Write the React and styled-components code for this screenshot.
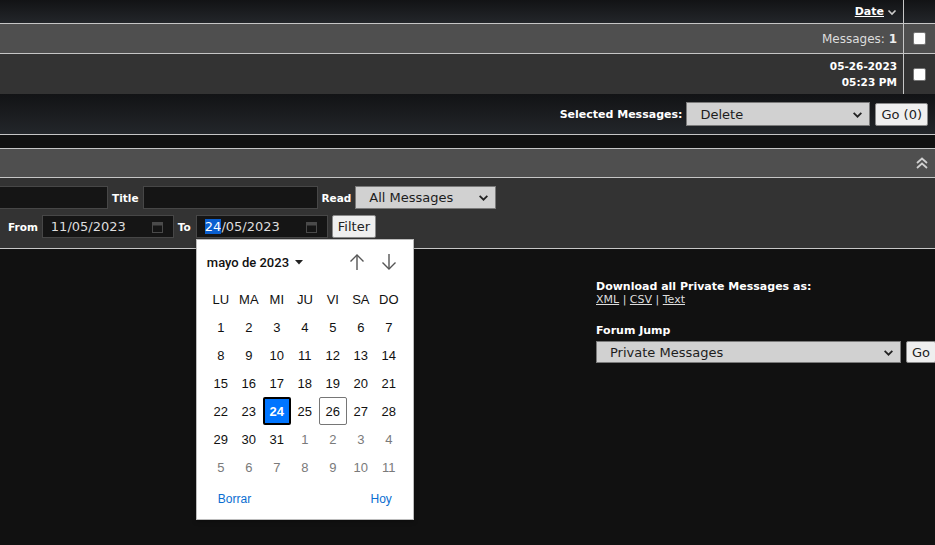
import React from 'react';
import styled, { createGlobalStyle } from 'styled-components';

const GlobalStyle = createGlobalStyle`
  html, body {
    margin: 0;
    padding: 0;
    background: #111;
  }
  body {
    font-family: "DejaVu Sans", Verdana, sans-serif;
    font-size: 11px;
    color: #fff;
    overflow: hidden;
  }
`;

const Page = styled.div`
  width: 935px;
  height: 545px;
  overflow: hidden;
  background: #111;
`;

const LINE = '#c6c6c6';
const GRADIENT = 'linear-gradient(to bottom, #121315 0%, #23262a 100%)';

const Row = styled.div`
  display: grid;
  grid-template-columns: 1fr 32px;
  height: ${p => p.h}px;
  background: ${p => p.bg};
  border-bottom: ${p => (p.line ? `1px solid ${LINE}` : 'none')};
`;

const MainCell = styled.div`
  display: flex;
  flex-direction: column;
  align-items: flex-end;
  justify-content: center;
  padding-right: 6px;
  line-height: 16px;
`;

const CheckCell = styled.div`
  border-left: 1px solid ${LINE};
  display: flex;
  align-items: center;
  justify-content: center;
`;

const Checkbox = styled.div`
  width: 11px;
  height: 11px;
  background: #fff;
  border: 1px solid #767676;
  border-radius: 2px;
`;

const SortLink = styled.span`
  display: flex;
  align-items: center;
  gap: 3px;
  font-weight: bold;
  font-size: 11px;
  a {
    color: #fff;
    text-decoration: underline;
  }
`;

const Count = styled.span`
  color: #ddd;
  font-size: 12px;
  b {
    color: #eee;
  }
`;

const Stamp = styled.span`
  font-weight: bold;
  font-size: 10.5px;
  color: #fff;
`;

const ActionBar = styled.div`
  height: 40px;
  background: ${GRADIENT};
  border-bottom: 1px solid ${LINE};
  display: flex;
  align-items: center;
  justify-content: flex-end;
  padding-right: 7px;
  gap: 4px;
`;

const Label = styled.span`
  font-weight: bold;
  font-size: ${p => p.fs || 11}px;
  color: #fff;
`;

const Select = styled.div`
  box-sizing: border-box;
  width: ${p => p.w}px;
  height: ${p => p.h || 24}px;
  background: #d1d1d1;
  border: 1px solid #7a7a7a;
  color: #1d1d1d;
  font-size: 13px;
  display: flex;
  align-items: center;
  justify-content: space-between;
  padding: 0 6px 0 13px;
`;

const Button = styled.div`
  box-sizing: border-box;
  height: ${p => p.h || 23}px;
  padding: 0 5px;
  margin-left: ${p => p.ml || 0}px;
  background: #efefef;
  border: 1px solid #8a8a8a;
  border-radius: 2px;
  color: #222;
  font-size: 13px;
  display: flex;
  align-items: center;
`;

const Spacer = styled.div`
  height: 13px;
  background: #111;
  border-bottom: 1px solid ${LINE};
`;

const SectionBar = styled.div`
  height: 28px;
  background: #4f4f4f;
  border-bottom: 1px solid ${LINE};
  display: flex;
  align-items: center;
  justify-content: flex-end;
  padding-right: 6px;
`;

const FilterArea = styled.div`
  height: 62px;
  padding-top: 8px;
  background: #333;
  border-bottom: 1px solid ${LINE};
  display: flex;
  flex-direction: column;
  gap: 6px;
`;

const FilterRow = styled.div`
  display: flex;
  align-items: center;
  gap: 4px;
  padding-left: ${p => p.pl || 0}px;
  margin-left: ${p => p.ml || 0}px;
`;

const TextInput = styled.div`
  box-sizing: border-box;
  width: ${p => p.w}px;
  height: 23px;
  background: #151515;
  border: 1px solid #474747;
`;

const DateWrap = styled.div`
  position: relative;
  margin-left: ${p => p.ml || 0}px;
`;

const DateInput = styled.div`
  box-sizing: border-box;
  width: 132px;
  height: 23px;
  background: #151515;
  border: 1px solid #474747;
  color: #ddd;
  font-size: 13px;
  display: flex;
  align-items: center;
  justify-content: space-between;
  padding: 0 10px 0 8px;
`;

const Highlight = styled.span`
  background: #0a5fd0;
  color: #fff;
`;

const Lower = styled.div`
  display: flex;
  padding-top: 31px;
`;

const LowerLeft = styled.div`
  width: 596px;
  flex-shrink: 0;
`;

const SideBox = styled.div`
  display: flex;
  flex-direction: column;
  line-height: 13px;
`;

const Links = styled.div`
  color: #ddd;
  font-size: 11px;
  margin-bottom: 18px;
  a {
    color: #ddd;
    text-decoration: underline;
  }
`;

const JumpRow = styled.div`
  display: flex;
  align-items: center;
  gap: 5px;
  margin-top: 4px;
`;

/* calendar popup */

const Popup = styled.div`
  position: absolute;
  top: 24px;
  left: 0;
  width: 216px;
  height: 279px;
  background: #fff;
  border: 1px solid #bcbcbc;
  box-shadow: 0 2px 4px rgba(0, 0, 0, 0.25);
  font-family: "Liberation Sans", Arial, sans-serif;
  color: #111;
  z-index: 5;
`;

const CalHeader = styled.div`
  display: flex;
  align-items: center;
  height: 24px;
  margin: 10px 0 11px;
  padding: 0 16px 0 10px;
`;

const MonthLabel = styled.div`
  font-family: Roboto, "Liberation Sans", sans-serif;
  font-weight: 500;
  font-size: 13px;
  display: flex;
  align-items: center;
  gap: 6px;
  flex: 1;
`;

const Arrows = styled.div`
  display: flex;
  gap: 16px;
`;

const Grid = styled.div`
  display: grid;
  grid-template-columns: repeat(7, 28px);
  grid-auto-rows: 28px;
  padding-left: 10px;
`;

const Cell = styled.div`
  box-sizing: border-box;
  display: flex;
  align-items: center;
  justify-content: center;
  font-size: 13px;
  color: ${p => (p.muted ? '#7a7a7a' : '#111')};
  ${p => p.today && 'border: 1px solid #767676; border-radius: 2px;'}
  ${p => p.selected && 'background: #0075ff; color: #fff; font-weight: bold; border: 2px solid #000; border-radius: 2px;'}
`;

const CalFooter = styled.div`
  display: flex;
  justify-content: space-between;
  align-items: center;
  height: 24px;
  margin-top: 6px;
  padding: 0 21px 0 21px;
  font-size: 12px;
  color: #0a6ed1;
`;

const Chevron = ({ size = 10, color = '#ccc' }) => (
  <svg width={size} height={size} viewBox="0 0 10 10">
    <polyline points="1.5,3.5 5,7 8.5,3.5" fill="none" stroke={color} strokeWidth="1.6" />
  </svg>
);

const DoubleUp = () => (
  <svg width="14" height="12" viewBox="0 0 14 12">
    <polyline points="2,6 7,1.5 12,6" fill="none" stroke="#d0d0d0" strokeWidth="1.8" />
    <polyline points="2,11 7,6.5 12,11" fill="none" stroke="#d0d0d0" strokeWidth="1.8" />
  </svg>
);

const CalIcon = () => (
  <svg width="11" height="12" viewBox="0 0 11 12">
    <rect x="0.5" y="1.5" width="10" height="10" fill="none" stroke="#4a4a4a" />
    <rect x="0.5" y="1.5" width="10" height="3" fill="#4a4a4a" />
  </svg>
);

const Arrow = ({ down }) => (
  <svg width="16" height="18" viewBox="0 0 16 18" style={down ? { transform: 'rotate(180deg)' } : undefined}>
    <line x1="8" y1="2" x2="8" y2="17" stroke="#555" strokeWidth="1.4" />
    <polyline points="1.5,8.5 8,2 14.5,8.5" fill="none" stroke="#555" strokeWidth="1.4" />
  </svg>
);

const weekdays = ['LU', 'MA', 'MI', 'JU', 'VI', 'SA', 'DO'];

const days = [
  ...Array.from({ length: 31 }, (_, i) => ({ d: i + 1 })),
  ...Array.from({ length: 11 }, (_, i) => ({ d: i + 1, muted: true })),
];

function Calendar() {
  return (
    <Popup>
      <CalHeader>
        <MonthLabel>
          mayo de 2023
          <svg width="8" height="5" viewBox="0 0 8 5">
            <polygon points="0,0 8,0 4,4.5" fill="#222" />
          </svg>
        </MonthLabel>
        <Arrows>
          <Arrow />
          <Arrow down />
        </Arrows>
      </CalHeader>
      <Grid>
        {weekdays.map(w => (
          <Cell key={w}>{w}</Cell>
        ))}
        {days.map((x, i) => (
          <Cell
            key={i}
            muted={x.muted}
            selected={!x.muted && x.d === 24}
            today={!x.muted && x.d === 26}
          >
            {x.d}
          </Cell>
        ))}
      </Grid>
      <CalFooter>
        <span>Borrar</span>
        <span>Hoy</span>
      </CalFooter>
    </Popup>
  );
}

export default function App() {
  return (
    <Page>
      <GlobalStyle />
      <Row h={23} bg={GRADIENT} line>
        <MainCell>
          <SortLink>
            <a>Date</a>
            <Chevron />
          </SortLink>
        </MainCell>
        <CheckCell />
      </Row>
      <Row h={29} bg="#4f4f4f" line>
        <MainCell>
          <Count>
            Messages: <b>1</b>
          </Count>
        </MainCell>
        <CheckCell>
          <Checkbox />
        </CheckCell>
      </Row>
      <Row h={40} bg="#333">
        <MainCell>
          <Stamp>05-26-2023</Stamp>
          <Stamp>05:23 PM</Stamp>
        </MainCell>
        <CheckCell>
          <Checkbox />
        </CheckCell>
      </Row>
      <ActionBar>
        <Label>Selected Messages:</Label>
        <Select w={184}>
          Delete
          <Chevron size={11} color="#222" />
        </Select>
        <Button ml={1}>Go (0)</Button>
      </ActionBar>
      <Spacer />
      <SectionBar>
        <DoubleUp />
      </SectionBar>
      <FilterArea>
        <FilterRow ml={-80}>
          <TextInput w={188} />
          <Label fs={10.5}>Title</Label>
          <TextInput w={175} />
          <Label fs={10.5}>Read</Label>
          <Select w={141} h={23}>
            All Messages
            <Chevron size={11} color="#222" />
          </Select>
        </FilterRow>
        <FilterRow pl={8}>
          <Label fs={10.5}>From</Label>
          <DateWrap>
            <DateInput>
              11/05/2023
              <CalIcon />
            </DateInput>
          </DateWrap>
          <Label fs={10.5}>To</Label>
          <DateWrap ml={1}>
            <DateInput>
              <span>
                <Highlight>24</Highlight>/05/2023
              </span>
              <CalIcon />
            </DateInput>
            <Calendar />
          </DateWrap>
          <Button>Filter</Button>
        </FilterRow>
      </FilterArea>
      <Lower>
        <LowerLeft />
        <SideBox>
          <Label>Download all Private Messages as:</Label>
          <Links>
            <a>XML</a> | <a>CSV</a> | <a>Text</a>
          </Links>
          <Label>Forum Jump</Label>
          <JumpRow>
            <Select w={305} h={22}>
              Private Messages
              <Chevron size={11} color="#222" />
            </Select>
            <Button h={22}>Go</Button>
          </JumpRow>
        </SideBox>
      </Lower>
    </Page>
  );
}
